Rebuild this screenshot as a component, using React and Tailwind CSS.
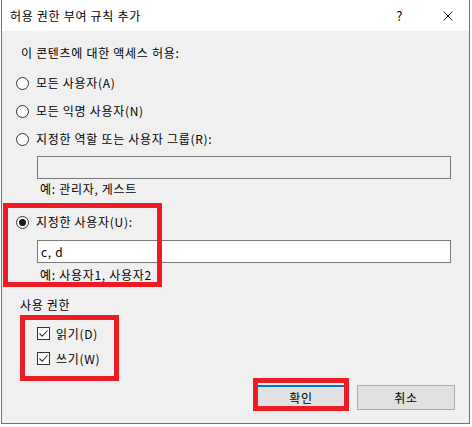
import React from 'react'

const font = { fontFamily: '"Noto Sans CJK KR", "Noto Sans", sans-serif' }

const Radio = ({ checked }) => (
  <span className="w-[13px] h-[13px] rounded-full border border-[#333333] bg-white flex items-center justify-center shrink-0">
    {checked && <span className="w-[7px] h-[7px] rounded-full bg-[#1a1a1a]" />}
  </span>
)

const Check = () => (
  <span className="w-[13px] h-[13px] border border-[#333333] bg-white flex items-center justify-center shrink-0">
    <svg width="11" height="11" viewBox="0 0 11 11">
      <path d="M1.5 5.5 L4.2 8.2 L9.5 2.5" fill="none" stroke="#333333" strokeWidth="1.1" />
    </svg>
  </span>
)

const RadioRow = ({ checked, label }) => (
  <div className="h-[28px] flex items-center ml-[14px] gap-[7px]">
    <Radio checked={checked} />
    <span>{label}</span>
  </div>
)

const CheckRow = ({ label }) => (
  <div className="h-[25px] flex items-center ml-[35px] gap-[6px]">
    <Check />
    <span>{label}</span>
  </div>
)

export default function App() {
  return (
    <div className="w-[472px] h-[427px] bg-white text-[12px] tracking-[0.7px] text-black leading-none" style={font}>
      {/* the dialog window */}
      <div className="relative ml-px w-[469px] h-[424px] border-x border-b border-[#737373] bg-[#f0f0f0]">
        {/* title bar */}
        <div className="h-[31px] bg-white flex items-center">
          <span className="ml-[8px] text-[12px]">허용 권한 부여 규칙 추가</span>
          <span className="ml-auto mr-[40px] text-[13px]">?</span>
          <svg className="mr-[16px]" width="10" height="10" viewBox="0 0 10 10">
            <path d="M0.5 0.5 L9.5 9.5 M9.5 0.5 L0.5 9.5" stroke="#111" strokeWidth="1" />
          </svg>
        </div>

        {/* content */}
        <div className="mt-[12px] h-[20px] flex items-center ml-[19px]">이 콘텐츠에 대한 액세스 허용:</div>
        <div className="mt-[6px]">
          <RadioRow label="모든 사용자(A)" />
          <RadioRow label="모든 익명 사용자(N)" />
          <RadioRow label="지정한 역할 또는 사용자 그룹(R):" />
        </div>
        <div className="mt-[3px] ml-[35px] w-[414px] h-[23px] border border-[#7a7a7a] bg-[#f0f0f0]" />
        <div className="h-[20px] flex items-center ml-[38px]">예: 관리자, 게스트</div>

        <div className="mt-[9px]">
          <RadioRow checked label="지정한 사용자(U):" />
        </div>
        <div className="mt-[4px] ml-[35px] w-[414px] h-[23px] border border-[#7a7a7a] bg-white flex items-center px-[3px]">c, d</div>
        <div className="mt-[2px] h-[20px] flex items-center ml-[38px]">예: 사용자1, 사용자2</div>

        <div className="mt-[10px] h-[20px] flex items-center ml-[18px]">사용 권한</div>
        <div className="mt-[6px]">
          <CheckRow label="읽기(D)" />
          <CheckRow label="쓰기(W)" />
        </div>

        {/* buttons */}
        <div className="mt-[14px] flex justify-end gap-[11px] pr-[14px]">
          <button className="w-[90px] h-[25px] border-2 border-[#0078d7] bg-[#e1e1e1] flex items-center justify-center">확인</button>
          <button className="w-[98px] h-[25px] border border-[#adadad] bg-[#e1e1e1] flex items-center justify-center">취소</button>
        </div>

        {/* red highlight boxes drawn over the dialog */}
        <div className="absolute left-[1px] top-[203px] w-[159px] h-[84px] border-[5px] border-[#ed1c24] pointer-events-none" />
        <div className="absolute left-[18px] top-[315px] w-[99px] h-[66px] border-[5px] border-[#ed1c24] pointer-events-none" />
        <div className="absolute left-[251px] top-[378px] w-[96px] h-[33px] border-[5px] border-[#ed1c24] pointer-events-none" />
      </div>
    </div>
  )
}
